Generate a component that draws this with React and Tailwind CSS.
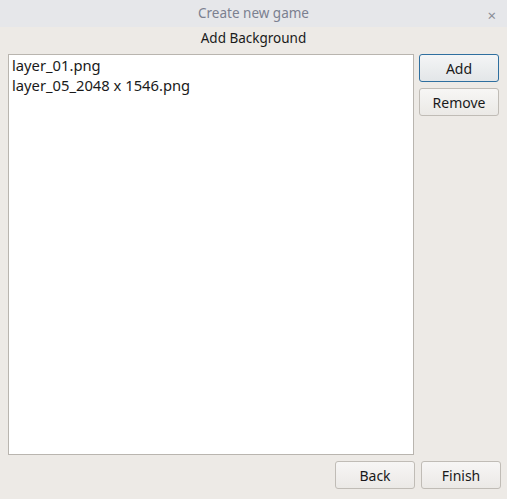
import React from "react";

const Button = ({ children, focused }) => (
  <button
    className={
      focused
        ? "h-[28px] w-[80px] rounded-[3px] border border-[#2f6f9f] bg-gradient-to-b from-[#f4f5f6] to-[#e3e6e8] text-[14px] text-[#1a1a1a]"
        : "h-[28px] w-[80px] rounded-[3px] border border-[#c0bcb6] bg-gradient-to-b from-[#f7f6f5] to-[#ebe9e6] text-[14px] text-[#1a1a1a]"
    }
  >
    {children}
  </button>
);

const App = () => {
  const files = ["layer_01.png", "layer_05_2048 x 1546.png"];

  return (
    <div
      className="flex h-[499px] w-[507px] flex-col bg-[#edeae6]"
      style={{ fontFamily: '"Noto Sans", sans-serif' }}
    >
      {/* title bar */}
      <div className="relative flex h-[27px] items-center justify-center bg-[#e6e7ea] text-[13.5px] text-[#7b8090]">
        Create new game
        <span className="absolute right-[11px] top-[4px] text-[15px] text-[#8a8d96]">×</span>
      </div>

      <div className="flex h-[23px] items-center justify-center text-[13.5px] text-[#1a1a1a]">
        Add Background
      </div>

      <div className="flex flex-1 gap-[5px] px-[8px] pt-[4px]">
        <div className="h-[401px] w-[408px] border border-[#b9b5af] bg-white px-[3px] py-0 text-[14.75px] leading-[20px] text-[#1a1a1a]">
          {files.map((f) => (
            <div key={f}>{f}</div>
          ))}
        </div>
        <div className="flex flex-col gap-[6px]">
          <Button focused>Add</Button>
          <Button>Remove</Button>
        </div>
      </div>

      <div className="flex justify-end gap-[6px] pb-[10px] pr-[6px]">
        <Button>Back</Button>
        <Button>Finish</Button>
      </div>
    </div>
  );
};

export default App;
